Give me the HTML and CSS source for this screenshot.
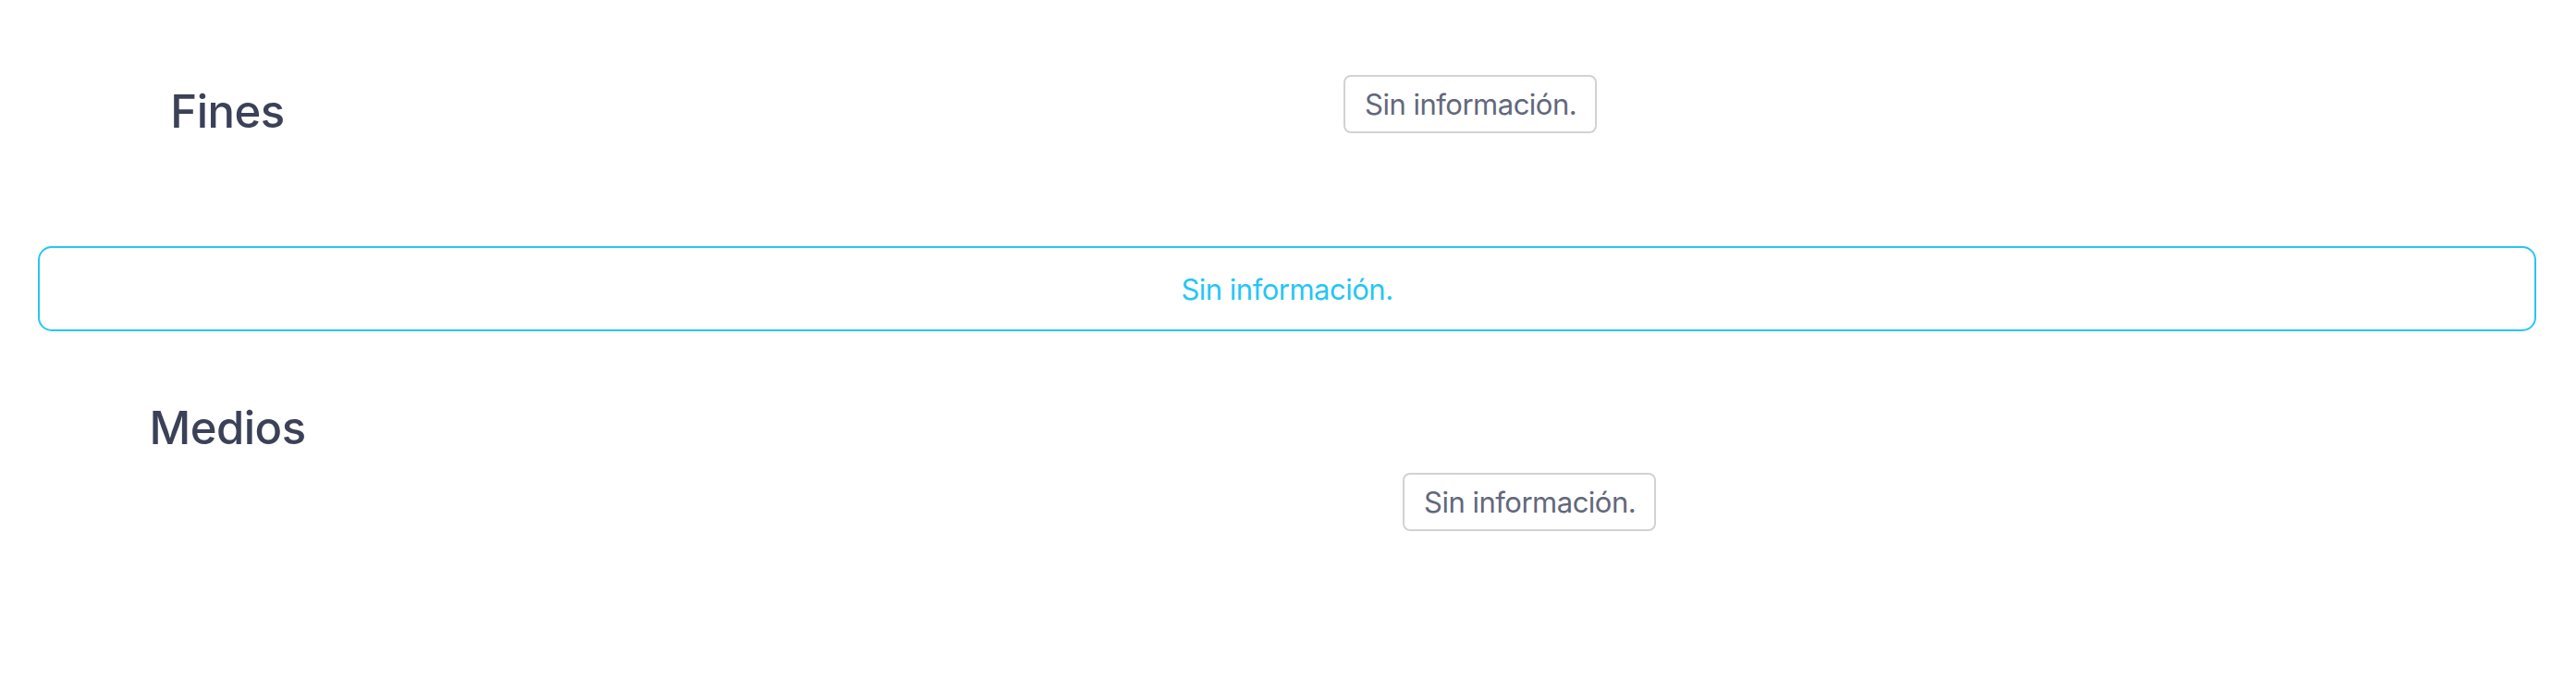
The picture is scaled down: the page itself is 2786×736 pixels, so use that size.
FILE: index.html
```html
<!DOCTYPE html>
<html lang="es">

<head>
    <meta charset="UTF-8">
    <meta name="viewport" content="width=device-width, initial-scale=1.0">
    <title>Fines y Medios</title>
    <link rel="stylesheet" href="styles.css">
</head>

<body>
    <section class="row row-fines">
        <h2 class="row-title">Fines</h2>
        <div class="row-content content-fines">
            <span class="empty-tag">Sin información.</span>
        </div>
    </section>

    <div class="notice">Sin información.</div>

    <section class="row row-medios">
        <h2 class="row-title">Medios</h2>
        <div class="row-content content-medios">
            <span class="empty-tag">Sin información.</span>
        </div>
    </section>
</body>

</html>
```

FILE: styles.css
```css
body {
    margin: 0;
    padding: 0;
    font-family: Inter, "Noto Sans", sans-serif;
    background: #ffffff;
}

.row {
    display: flex;
    align-items: flex-start;
}

.row-fines {
    padding-top: 81px;
}

.row-medios {
    padding-top: 76px;
}

.row-title {
    width: 492px;
    flex-shrink: 0;
    margin: 0;
    text-align: center;
    font-size: 49px;
    font-weight: 450;
    letter-spacing: -0.5px;
    line-height: 58px;
    color: #3b4157;
}

.row-fines .row-title {
    margin-top: 11px;
}

.content-fines {
    margin-left: 961px;
}

.content-medios {
    margin-left: 1025px;
    margin-top: 77px;
}

.empty-tag {
    display: inline-block;
    padding: 10px 20px 10px 21px;
    border: 2px solid #d2d2d2;
    border-radius: 8px;
    font-size: 31px;
    letter-spacing: -0.5px;
    line-height: 39px;
    color: #62687b;
}

.notice {
    margin: 116px 43px 0 41px;
    padding: 25px 0 24px;
    border: 2px solid #25c6f5;
    border-radius: 15px;
    text-align: center;
    font-size: 31px;
    letter-spacing: -0.5px;
    line-height: 39px;
    color: #25c6f5;
}
```
